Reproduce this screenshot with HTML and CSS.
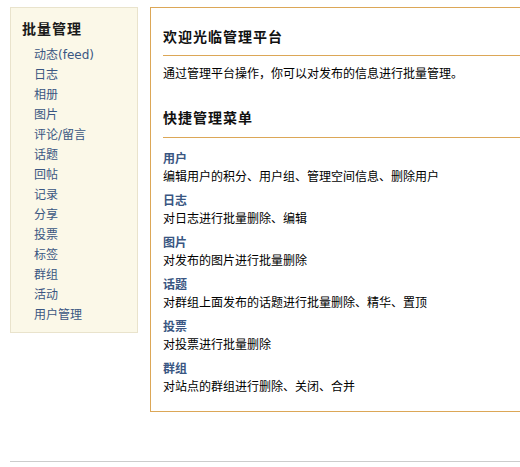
FILE: index.html
```html
<!DOCTYPE html>
<html lang="zh-CN">
<head>
<meta charset="utf-8">
<title>批量管理</title>
<link rel="stylesheet" href="styles.css">
</head>
<body>
<div class="page">
  <div class="layout">
    <aside class="side">
      <h3 class="side-title">批量管理</h3>
      <ul class="side-menu">
        <li><a href="#">动态(feed)</a></li>
        <li><a href="#">日志</a></li>
        <li><a href="#">相册</a></li>
        <li><a href="#">图片</a></li>
        <li><a href="#">评论/留言</a></li>
        <li><a href="#">话题</a></li>
        <li><a href="#">回帖</a></li>
        <li><a href="#">记录</a></li>
        <li><a href="#">分享</a></li>
        <li><a href="#">投票</a></li>
        <li><a href="#">标签</a></li>
        <li><a href="#">群组</a></li>
        <li><a href="#">活动</a></li>
        <li><a href="#">用户管理</a></li>
      </ul>
    </aside>
    <main class="main">
      <h2 class="heading first">欢迎光临管理平台</h2>
      <p class="intro">通过管理平台操作，你可以对发布的信息进行批量管理。</p>
      <h2 class="heading second">快捷管理菜单</h2>
      <dl class="quick">
        <div class="item"><dt><a href="#">用户</a></dt><dd>编辑用户的积分、用户组、管理空间信息、删除用户</dd></div>
        <div class="item"><dt><a href="#">日志</a></dt><dd>对日志进行批量删除、编辑</dd></div>
        <div class="item"><dt><a href="#">图片</a></dt><dd>对发布的图片进行批量删除</dd></div>
        <div class="item"><dt><a href="#">话题</a></dt><dd>对群组上面发布的话题进行批量删除、精华、置顶</dd></div>
        <div class="item"><dt><a href="#">投票</a></dt><dd>对投票进行批量删除</dd></div>
        <div class="item"><dt><a href="#">群组</a></dt><dd>对站点的群组进行删除、关闭、合并</dd></div>
      </dl>
    </main>
  </div>
  <div class="footer"></div>
</div>
</body>
</html>
```

FILE: styles.css
```css
html, body {
  margin: 0;
  padding: 0;
  background: #ffffff;
  overflow: hidden;
}

body {
  font-family: "Noto Sans CJK SC", "DejaVu Sans", sans-serif;
  font-size: 12px;
  color: #000;
}

.page {
  padding: 7px 0 0 10px;
  width: 510px;
  overflow: hidden;
}

.layout {
  display: flex;
  align-items: flex-start;
  gap: 12px;
}

.side {
  flex: 0 0 auto;
  width: 126px;
  background: #fbf8e8;
  border: 1px solid #e9e3cc;
  padding: 10px 0 8px 0;
}

.side-title {
  margin: 0 0 6px 11px;
  font-size: 14px;
  line-height: 20px;
  font-weight: bold;
  letter-spacing: 1px;
  color: #1a1a1a;
}

.side-menu {
  list-style: none;
  margin: 0;
  padding: 0 0 0 23px;
}

.side-menu li {
  line-height: 20px;
  height: 20px;
}

.side-menu a {
  color: #3a5682;
  text-decoration: none;
  font-family: "DejaVu Sans", "Noto Sans CJK SC", sans-serif;
}

.main {
  flex: 0 0 auto;
  width: 420px;
  border: 1px solid #dca757;
  padding: 18px 0 16px 12px;
}

.heading {
  margin: 0;
  font-size: 14px;
  line-height: 20px;
  font-weight: bold;
  letter-spacing: 1px;
  color: #111;
  border-bottom: 1px solid #dca757;
  padding-bottom: 9px;
}

.heading.second {
  padding-bottom: 10px;
  margin-top: 25px;
}

.intro {
  margin: 8px 0 0 0;
  line-height: 18px;
}

.quick {
  margin: 11px 0 0 0;
  display: flex;
  flex-direction: column;
  gap: 6px;
}

.item dt {
  line-height: 18px;
  font-weight: bold;
}

.item dt a {
  color: #3a5682;
  text-decoration: none;
}

.item dd {
  margin: 0;
  line-height: 18px;
}

.footer {
  margin-top: 49px;
  border-top: 1px solid #cccccc;
  height: 10px;
}
```
